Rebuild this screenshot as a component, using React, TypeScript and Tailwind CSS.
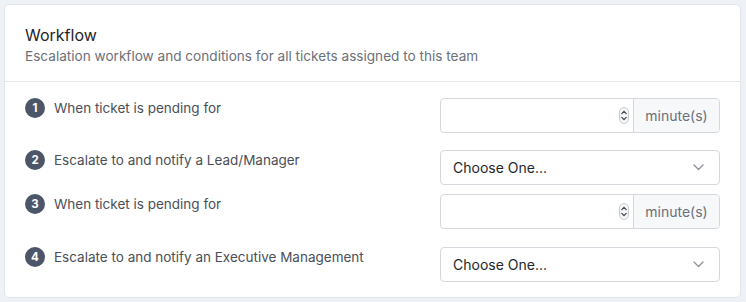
import React from 'react';

const Badge: React.FC<{ n: number }> = ({ n }) => (
  <span className="flex h-[20px] w-[20px] shrink-0 items-center justify-center rounded-full bg-[#4c5668] text-[11.5px] font-bold text-white">
    {n}
  </span>
);

const Spinner = () => (
  <svg width="10" height="17" viewBox="0 0 10 17" className="shrink-0">
    <rect x="0.5" y="0.5" width="9" height="16" rx="4.5" fill="#f3f4f6" stroke="#c8cbd0" />
    <path d="M2.8 6.6 L5 4.4 L7.2 6.6" fill="none" stroke="#3f4652" strokeWidth="1.3" strokeLinecap="round" strokeLinejoin="round" />
    <path d="M2.8 10.4 L5 12.6 L7.2 10.4" fill="none" stroke="#3f4652" strokeWidth="1.3" strokeLinecap="round" strokeLinejoin="round" />
  </svg>
);

const MinutesInput = () => (
  <div className="flex h-[35px] w-[280px] overflow-hidden rounded-[4px] border border-[#d4d7dc] bg-white">
    <div className="flex flex-1 items-center justify-end pr-[4px]">
      <Spinner />
    </div>
    <div className="flex w-[86px] items-center justify-center border-l border-[#d4d7dc] bg-[#f7f8fa] text-[14px] text-[#6b7079]">
      minute(s)
    </div>
  </div>
);

const ChooseSelect = () => (
  <div className="flex h-[35px] w-[280px] items-center justify-between rounded-[4px] border border-[#d4d7dc] bg-white pl-[12px] pr-[15px] text-[14px] text-[#23262b]">
    <span>Choose One...</span>
    <svg width="11" height="7" viewBox="0 0 11 7">
      <path d="M1 1 L5.5 5.5 L10 1" fill="none" stroke="#8a8f98" strokeWidth="1.3" strokeLinecap="round" strokeLinejoin="round" />
    </svg>
  </div>
);

export default function App() {
  const steps = [
    { n: 1, label: 'When ticket is pending for', kind: 'minutes', mt: 'mt-0' },
    { n: 2, label: 'Escalate to and notify a Lead/Manager', kind: 'select', mt: 'mt-[17px]' },
    { n: 3, label: 'When ticket is pending for', kind: 'minutes', mt: 'mt-[9px]' },
    { n: 4, label: 'Escalate to and notify an Executive Management', kind: 'select', mt: 'mt-[18px]' },
  ];

  return (
    <div className="h-[302px] w-[746px] bg-[#eef1f5] pl-[4px] pt-[4px] font-['Inter','Liberation_Sans',sans-serif]">
      <div className="h-[294px] w-[737px] rounded-[5px] border border-[#e1e4e8] bg-white">
        <div className="border-b border-[#e3e6ea] px-[20px] pb-[15px] pt-[19px]">
          <h2 className="text-[16px] leading-[22px] text-[#1f2328]">Workflow</h2>
          <p className="text-[13.6px] leading-[20px] text-[#6b7079]">
            Escalation workflow and conditions for all tickets assigned to this team
          </p>
        </div>
        <div className="px-[20px] pt-[16px]">
          {steps.map((s) => (
            <div key={s.n} className={`flex items-start justify-between ${s.mt}`}>
              <div className="flex items-center gap-[9px] text-[13.5px] leading-[20px] text-[#4a4f57]">
                <Badge n={s.n} />
                <span>{s.label}</span>
              </div>
              {s.kind === 'minutes' ? <MinutesInput /> : <ChooseSelect />}
            </div>
          ))}
        </div>
      </div>
    </div>
  );
}
